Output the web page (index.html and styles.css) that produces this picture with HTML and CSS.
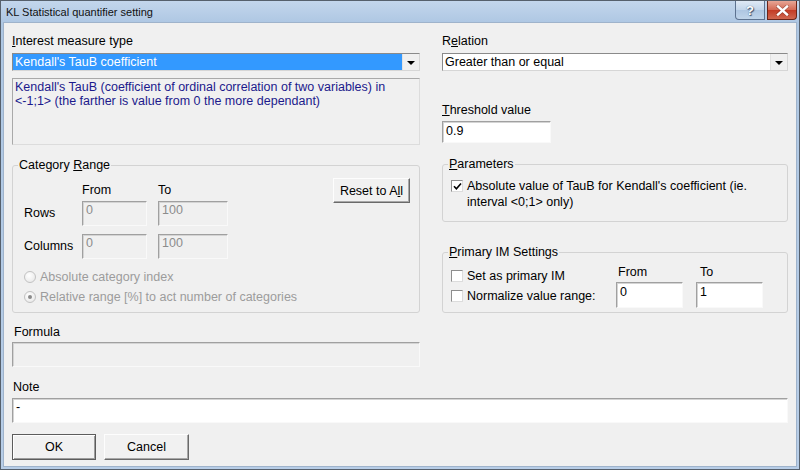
FILE: index.html
```html
<!DOCTYPE html>
<html>
<head>
<meta charset="utf-8">
<title>KL Statistical quantifier setting</title>
<link rel="stylesheet" href="styles.css">
</head>
<body>
<div class="window">
  <div class="titlebar">
    <span class="title">KL Statistical quantifier setting</span>
    <div class="caption-btns">
      <div class="cbtn help">?</div>
      <div class="cbtn close">
        <svg width="13" height="11" viewBox="0 0 13 11"><path d="M2 1.5 L11 9.5 M11 1.5 L2 9.5" stroke="#5a1a10" stroke-width="3.6" stroke-linecap="square" opacity="0.45"/><path d="M2 1.5 L11 9.5 M11 1.5 L2 9.5" stroke="#fff" stroke-width="2.4" stroke-linecap="square"/></svg>
      </div>
    </div>
  </div>
  <div class="client">
    <div class="top">
      <div class="col left">
        <div class="lbl"><u>I</u>nterest measure type</div>
        <div class="combo">
          <span class="val selected">Kendall's TauB coefficient</span>
          <span class="arrow"><i></i></span>
        </div>
        <div class="desc">Kendall's TauB (coefficient of ordinal correlation of two variables) in<br>&lt;-1;1&gt; (the farther is value from 0 the more dependant)</div>
        <fieldset class="group cat">
          <legend>Category <u>R</u>ange</legend>
          <div class="cat-top">
            <div class="range">
              <span></span><span class="hdr">From</span><span class="hdr">To</span>
              <span class="rl">Rows</span><div class="inp dis from">0</div><div class="inp dis to">100</div>
              <span class="rl">Columns</span><div class="inp dis from">0</div><div class="inp dis to">100</div>
            </div>
            <button class="btn reset">Reset to A<u>l</u>l</button>
          </div>
          <div class="radio dis"><span class="rb"></span>Absolute category index</div>
          <div class="radio dis last"><span class="rb on"></span>Relative range [%] to act number of categories</div>
        </fieldset>
        <div class="lbl formula-lbl">Formula</div>
        <div class="inp dis formula"></div>
      </div>
      <div class="col right">
        <div class="lbl">R<u>e</u>lation</div>
        <div class="combo">
          <span class="val">Greater than or equal</span>
          <span class="arrow"><i></i></span>
        </div>
        <div class="lbl thr-lbl"><u>T</u>hreshold value</div>
        <div class="inp white thr">0.9</div>
        <fieldset class="group params">
          <legend><u>P</u>arameters</legend>
          <div class="chk-row multi">
            <span class="cb"><svg width="9" height="9" viewBox="0 0 9 9"><path d="M1 4.2 L3.4 6.8 L8 1.5" fill="none" stroke="#000" stroke-width="1.6"/></svg></span>
            <span class="chk-text">Absolute value of TauB for Kendall's coefficient (ie.<br>interval &lt;0;1&gt; only)</span>
          </div>
        </fieldset>
        <fieldset class="group prim">
          <legend><u>P</u>rimary IM Settings</legend>
          <div class="prim-body">
            <div class="prim-checks">
              <div class="chk-row"><span class="cb"></span><span>Set as primary IM</span></div>
              <div class="chk-row"><span class="cb"></span><span>Normalize value range:</span></div>
            </div>
            <div class="prim-field">
              <div class="plbl">From</div>
              <div class="inp white pin">0</div>
            </div>
            <div class="prim-field to-field">
              <div class="plbl">To</div>
              <div class="inp white pin">1</div>
            </div>
          </div>
        </fieldset>
      </div>
    </div>
    <div class="lbl note-lbl">Note</div>
    <div class="inp white note">-</div>
    <div class="buttons">
      <button class="btn default ok">OK</button>
      <button class="btn cancel">Cancel</button>
    </div>
  </div>
</div>
</body>
</html>
```
FILE: styles.css
```css
* { box-sizing: border-box; }
html, body { margin: 0; padding: 0; }
body {
  width: 800px;
  height: 470px;
  overflow: hidden;
  background: #ffffff;
  font-family: "Liberation Sans", Arial, sans-serif;
  font-size: 12.5px;
  color: #000;
}
u { text-decoration: underline; text-underline-offset: 1px; }

.window {
  width: 800px;
  height: 470px;
  border: 1px solid #56606c;
  background: linear-gradient(#c3d6ec, #aec7e3 22px, #b7cde7);
  padding: 0 2px 2px 2px;
  display: flex;
  flex-direction: column;
}
.titlebar {
  height: 21px;
  flex: none;
  display: flex;
  justify-content: space-between;
  align-items: flex-start;
}
.title {
  font-size: 11px;
  line-height: 22px;
  padding-left: 3px;
  color: #111;
}
.caption-btns {
  display: flex;
  gap: 2px;
  margin-right: 0;
}
.cbtn {
  height: 19px;
  border: 1px solid #5d7290;
  border-top: none;
  display: flex;
  align-items: center;
  justify-content: center;
}
.help {
  width: 30px;
  border-radius: 0 0 0 4px;
  background: linear-gradient(#dfe9f5, #c2d5ea 50%, #aec6e2 51%, #c0d4ea);
  color: #fff;
  font-weight: bold;
  font-size: 13px;
  text-shadow: 0 0 1px #3b5070, 1px 1px 1px #3b5070;
}
.close {
  width: 30px;
  border-radius: 0 0 4px 0;
  border-color: #6a2418;
  background: linear-gradient(#e7a696, #d46a55 48%, #c23b25 52%, #d0674f);
}

.client {
  flex: 1;
  background: #f0f0f0;
  border: 1px solid #9fb3cb;
  padding: 11px 8px 0 8px;
}
.top {
  display: flex;
  gap: 22px;
  align-items: flex-start;
}
.left { width: 408px; }
.right { width: 346px; }

.lbl { line-height: 14px; }

.combo {
  margin-top: 5px;
  height: 18px;
  border: 1px solid;
  border-color: #8a8a8a #d6d6d6 #d6d6d6 #8a8a8a;
  background: #fff;
  display: flex;
}
.combo .val {
  flex: 1;
  line-height: 16px;
  padding-left: 2px;
}
.combo .val.selected {
  background: #3399ff;
  color: #fff;
}
.combo .arrow {
  width: 17px;
  background: #f0f0f0;
  border-left: 1px solid #e2e2e2;
  display: flex;
  align-items: center;
  justify-content: center;
}
.combo .arrow i {
  width: 0;
  height: 0;
  border-left: 4px solid transparent;
  border-right: 4px solid transparent;
  border-top: 4px solid #000;
  margin-top: 1px;
}

.desc {
  margin-top: 7px;
  height: 67px;
  border: 1px solid;
  border-color: #a9a9a9 #dcdcdc #dcdcdc #a9a9a9;
  padding: 1px 2px;
  line-height: 14px;
  color: #1c1a8c;
}

.group {
  margin: 0;
  padding: 0;
  min-width: 0;
  border: 1px solid #d3d3d3;
  border-radius: 3px;
}
.group legend {
  padding: 0 1px;
  margin-left: 5px;
  line-height: 14px;
}

.cat { margin-top: 13px; }
.cat-top {
  display: flex;
  justify-content: space-between;
  align-items: flex-start;
  padding: 0 9px 0 11px;
  margin-top: 6px;
}
.range {
  margin-top: 5px;
  display: grid;
  grid-template-columns: 58px 76px 70px;
  grid-template-rows: 14px 25px 29px;
  row-gap: 4px;
  align-items: end;
}
.hdr { line-height: 14px; }
.rl { line-height: 25px; height: 25px; }

.inp {
  border: 1px solid;
  border-color: #a0a0a0 #f9f9f9 #f9f9f9 #a0a0a0;
  box-shadow: inset 1px 1px #d4d4d4;
  line-height: 14px;
  padding: 1px 3px;
}
.inp.dis { color: #8c8c8c; background: #f0f0f0; }
.inp.white { background: #fff; }
.from { width: 65px; height: 25px; }
.to { width: 70px; height: 25px; }

.btn {
  font: inherit;
  color: #000;
  background: #f1f1f1;
  border: 1px solid;
  border-color: #fdfdfd #6a6a6a #6a6a6a #fdfdfd;
  box-shadow: inset -1px -1px #a8a8a8;
  padding: 0;
}
.reset { width: 77px; height: 25px; }

.radio {
  height: 20px;
  display: flex;
  align-items: center;
  padding-left: 11px;
  color: #9c9c9c;
}
.radio:first-of-type { margin-top: 8px; }
.cat .radio.dis:not(.last) { margin-top: 8px; }
.radio.last { margin-bottom: 5px; }
.rb {
  width: 12px;
  height: 12px;
  border-radius: 50%;
  border: 1px solid #c2c2c2;
  background: radial-gradient(circle at 40% 35%, #ffffff, #e4e4e4);
  margin-right: 4px;
  display: flex;
  align-items: center;
  justify-content: center;
}
.rb.on::after {
  content: "";
  width: 4px;
  height: 4px;
  border-radius: 50%;
  background: #8a8a8a;
}

.formula-lbl { margin-top: 12px; padding-left: 2px; }
.formula { margin-top: 3px; height: 25px; }

.thr-lbl { margin-top: 32px; }
.thr {
  margin-top: 4px;
  width: 109px;
  height: 22px;
  padding-top: 2px;
}

.params { margin-top: 14px; }
.chk-row {
  display: flex;
  align-items: center;
  padding-left: 8px;
  height: 20px;
}
.chk-row.multi {
  align-items: flex-start;
  height: auto;
  margin-top: 7px;
  margin-bottom: 11px;
}
.chk-row.multi .cb { margin-top: 2px; }
.chk-text { line-height: 16px; }
.cb {
  width: 12px;
  height: 12px;
  flex: none;
  background: #fff;
  border: 1px solid;
  border-color: #8e8e8e #dcdcdc #dcdcdc #8e8e8e;
  margin-right: 4px;
  display: flex;
  align-items: center;
  justify-content: center;
}

.prim { margin-top: 23px; }
.prim-body {
  display: flex;
  align-items: flex-start;
  padding-bottom: 4px;
}
.prim-checks {
  width: 173px;
  margin-top: 7px;
}
.prim-field { width: 67px; margin-top: 6px; }
.to-field { margin-left: 13px; }
.plbl { line-height: 14px; padding-left: 2px; }
.to-field .plbl { padding-left: 4px; }
.pin { margin-top: 3px; height: 26px; padding-top: 2px; }

.note-lbl { margin-top: 13px; padding-left: 1px; }
.note { margin-top: 4px; height: 25px; }

.buttons {
  margin-top: 11px;
  display: flex;
  gap: 8px;
}
.ok { width: 84px; height: 26px; }
.cancel { width: 85px; height: 26px; }
.btn.default {
  border-color: #5c5c5c;
  box-shadow: inset 1px 1px #fff, inset -1px -1px #9c9c9c;
}
```
